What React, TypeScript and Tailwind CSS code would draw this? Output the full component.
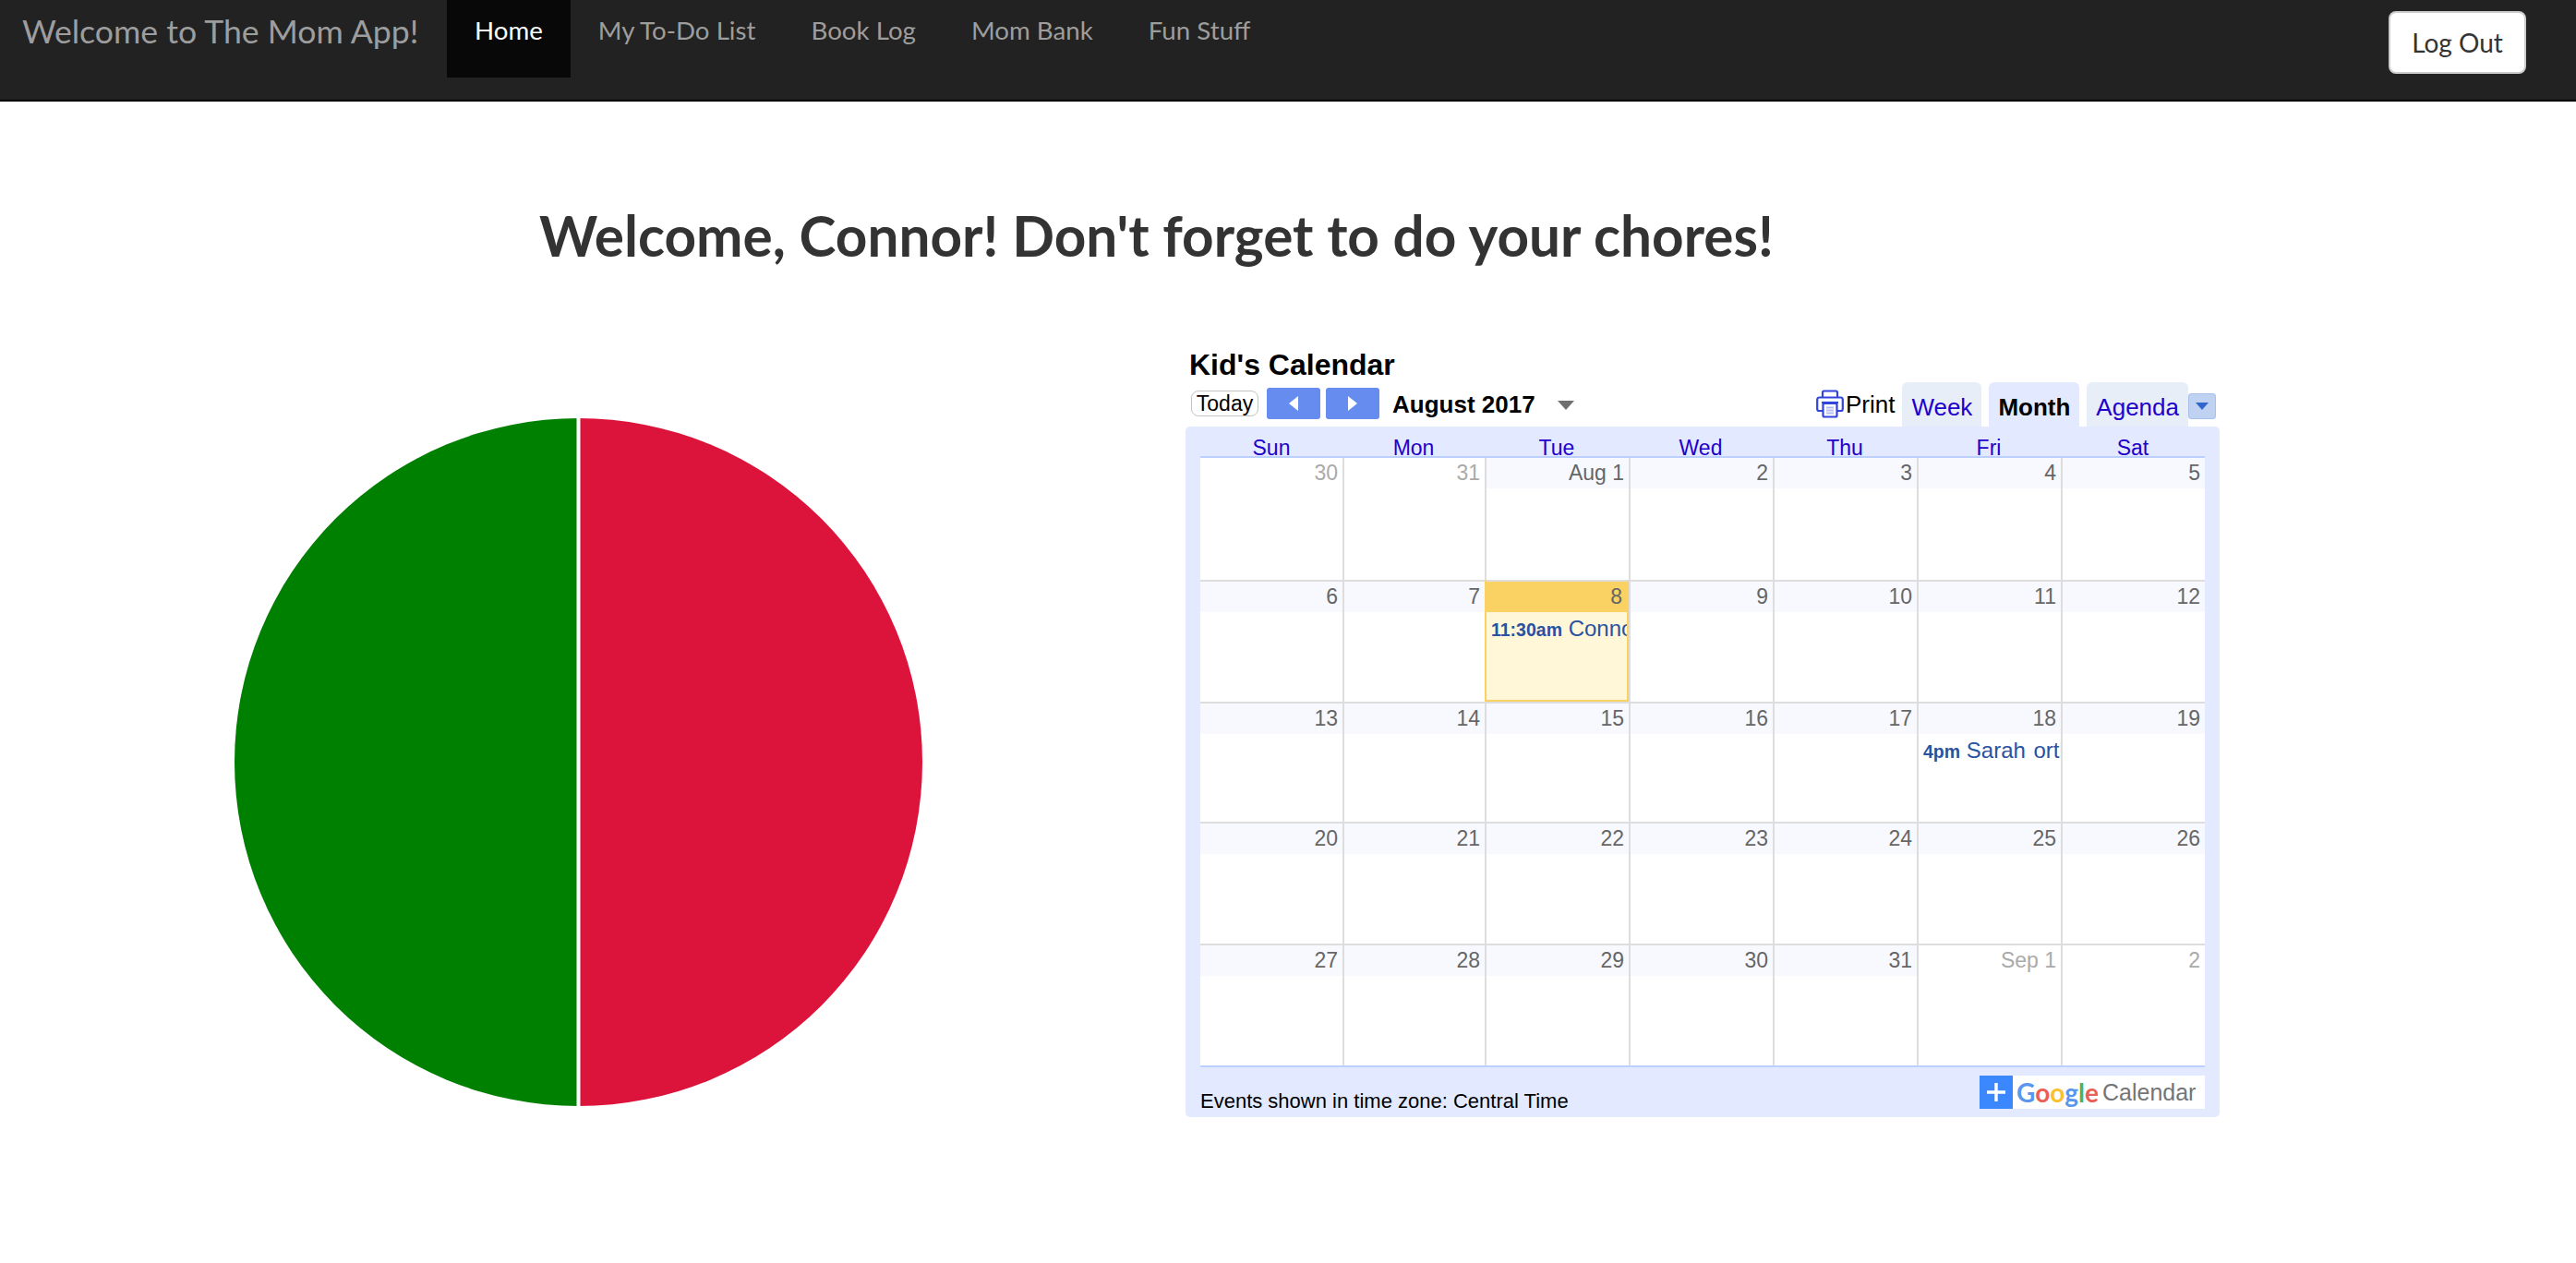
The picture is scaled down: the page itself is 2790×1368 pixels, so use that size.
import { ReactNode } from 'react';

// Nav links after the brand
const NAV_LINKS = ['Home', 'My To-Do List', 'Book Log', 'Mom Bank', 'Fun Stuff'];
const WEEKDAYS = ['Sun', 'Mon', 'Tue', 'Wed', 'Thu', 'Fri', 'Sat'];

type Day = { label: string; muted?: boolean; today?: boolean; time?: string; title?: string };

const WEEKS: { height: string; days: Day[] }[] = [
  {
    height: 'h-[132px]',
    days: [
      { label: '30', muted: true },
      { label: '31', muted: true },
      { label: 'Aug 1' },
      { label: '2' },
      { label: '3' },
      { label: '4' },
      { label: '5' },
    ],
  },
  {
    height: 'h-[132px]',
    days: [
      { label: '6' },
      { label: '7' },
      { label: '8', today: true, time: '11:30am', title: 'Connor dentist' },
      { label: '9' },
      { label: '10' },
      { label: '11' },
      { label: '12' },
    ],
  },
  {
    height: 'h-[130px]',
    days: [
      { label: '13' },
      { label: '14' },
      { label: '15' },
      { label: '16' },
      { label: '17' },
      { label: '18', time: '4pm', title: 'Sarah ortho' },
      { label: '19' },
    ],
  },
  {
    height: 'h-[132px]',
    days: ['20', '21', '22', '23', '24', '25', '26'].map((label) => ({ label })),
  },
  {
    height: 'h-[132px]',
    days: [
      { label: '27' },
      { label: '28' },
      { label: '29' },
      { label: '30' },
      { label: '31' },
      { label: 'Sep 1', muted: true },
      { label: '2', muted: true },
    ],
  },
];

function Navbar() {
  return (
    <nav className="flex h-[110px] items-start border-b-2 border-black bg-[#222222] font-['Lato',sans-serif]">
      <span className="w-[484px] pl-[24px] pt-[12px] text-[35.65px] leading-[44px] text-[#9d9d9d]">
        Welcome to The Mom App!
      </span>
      {NAV_LINKS.map((link) => (
        <a
          key={link}
          className={`h-[84px] px-[30px] pt-[13px] text-[27.7px] leading-[40px] ${
            link === 'Home' ? 'bg-[#080808] text-white' : 'text-[#9d9d9d]'
          }`}
        >
          {link}
        </a>
      ))}
      <button className="ml-auto mr-[54px] mt-[12px] h-[68px] w-[149px] rounded-[8px] border-2 border-[#cccccc] bg-white text-[28px] text-[#333333]">
        Log Out
      </button>
    </nav>
  );
}

// Two equal half slices with a white seam
function ChoresPie() {
  return (
    <svg viewBox="0 0 746 746" className="ml-[254px] mt-[77px] h-[745px] w-[745px] shrink-0">
      <path d="M373 373 L373 0 A373 373 0 0 1 373 746 Z" fill="#dc143c" />
      <path d="M373 373 L373 746 A373 373 0 0 1 373 0 Z" fill="#008000" />
      <line x1="373" y1="0" x2="373" y2="746" stroke="#ffffff" strokeWidth="4" />
    </svg>
  );
}

function PrintIcon() {
  return (
    <svg viewBox="0 0 30 31" className="h-[31px] w-[30px]" fill="none" stroke="#3344dd" strokeWidth="2.2">
      <path d="M7 9 V3 Q7 1.5 8.5 1.5 H21.5 Q23 1.5 23 3 V9" />
      <path d="M7 23 H3 Q1.2 23 1.2 21 V11 Q1.2 8.5 3.5 8.5 H26.5 Q28.8 8.5 28.8 11 V21 Q28.8 23 27 23 H23" />
      <path d="M6 14 H24" />
      <rect x="7.5" y="15" width="15" height="14.5" rx="1.5" />
      <path d="M11 19.5 H19 M11 22.5 H19 M11 25.5 H19" stroke="#b5bdf0" strokeWidth="2" />
    </svg>
  );
}

function Tab({ children, active }: { children: ReactNode; active?: boolean }) {
  return (
    <div
      className={`flex h-[48px] items-center rounded-t-[6px] px-[10px] pt-[6px] text-[26px] ${
        active ? 'bg-[#e3e9ff] font-bold text-black' : 'bg-[#e8eef7] text-[#2200cc]'
      }`}
    >
      {children}
    </div>
  );
}

function ArrowButton({ dir }: { dir: 'left' | 'right' }) {
  return (
    <button className="flex h-[34px] w-[58px] items-center justify-center rounded-[3px] bg-[#668cf0]">
      <svg viewBox="0 0 12 16" className="h-[16px] w-[12px]" fill="#ffffff">
        <path d={dir === 'left' ? 'M11 0 V16 L1 8 Z' : 'M1 0 V16 L11 8 Z'} />
      </svg>
    </button>
  );
}

function CalendarToolbar() {
  return (
    <div className="flex h-[48px] items-start pl-[6px] pr-[4px]">
      <button className="mt-[9px] flex h-[28px] w-[73px] items-center justify-center rounded-[8px] border border-[#c4c4c4] bg-white text-[23px] text-black">
        Today
      </button>
      <div className="ml-[9px] mt-[6px] flex gap-[6px]">
        <ArrowButton dir="left" />
        <ArrowButton dir="right" />
      </div>
      <span className="ml-[14px] mt-[9px] text-[26px] font-bold leading-[30px] text-black">August 2017</span>
      <svg viewBox="0 0 18 10" className="ml-[24px] mt-[20px] h-[10px] w-[18px]" fill="#6f6f6f">
        <path d="M0 0 H18 L9 10 Z" />
      </svg>
      <div className="ml-auto mt-[8px] flex items-center gap-[2px]">
        <PrintIcon />
        <span className="text-[26px] leading-[30px] text-black">Print</span>
      </div>
      <div className="ml-[8px] flex gap-[8px]">
        <Tab>Week</Tab>
        <Tab active>Month</Tab>
      </div>
      <div className="ml-[8px] flex items-start">
        <Tab>Agenda</Tab>
        <div className="mt-[12px] flex h-[28px] w-[30px] items-center justify-center rounded-[3px] border border-[#a9c0ec] bg-[#bfd2f2]">
          <svg viewBox="0 0 14 8" className="h-[8px] w-[14px]" fill="#3366cc">
            <path d="M0 0 H14 L7 8 Z" />
          </svg>
        </div>
      </div>
    </div>
  );
}

function DayCell({ day, first, topLine }: { day: Day; first: boolean; topLine: boolean }) {
  const stripColor = day.today ? 'bg-[#fad163]' : day.muted ? 'bg-white' : 'bg-[#f8f9ff]';
  const numberColor = day.muted ? 'text-[#aaaaaa]' : 'text-[#666666]';
  const edges = day.today
    ? 'border-x-2 border-b-2 border-[#fad163] bg-[#fff7d7]'
    : `bg-white ${first ? '' : 'border-l-2 border-[#dddddd]'}`;
  return (
    <div className={`min-w-0 overflow-hidden ${edges} ${topLine ? 'border-t-2 border-t-[#dddddd]' : ''}`}>
      <div className={`h-[33px] pr-[5px] text-right text-[23px] leading-[33px] ${stripColor} ${numberColor}`}>
        {day.label}
      </div>
      {day.time && (
        <div className="overflow-hidden whitespace-nowrap pl-[5px] pt-[2px] text-[24px] leading-[32px] text-[#2952a3]">
          <span className="text-[19.5px] font-bold">{day.time}</span>{' '}
          <span className="[word-spacing:2px]">{day.title}</span>
        </div>
      )}
    </div>
  );
}

function GoogleBadge() {
  const letters: [string, string][] = [
    ['G', 'text-[#5a95ee]'],
    ['o', 'text-[#ea5f55]'],
    ['o', 'text-[#fbc02d]'],
    ['g', 'text-[#5a95ee]'],
    ['l', 'text-[#4caf6a]'],
    ['e', 'text-[#ea5f55]'],
  ];
  return (
    <div className="flex h-[36px] w-[244px] items-center bg-white">
      <div className="flex h-[36px] w-[36px] items-center justify-center bg-[#3b87fd]">
        <svg viewBox="0 0 20 20" className="h-[20px] w-[20px]" stroke="#ffffff" strokeWidth="3.4">
          <path d="M10 0 V20 M0 10 H20" />
        </svg>
      </div>
      <span className="ml-[4px] font-['Lato',sans-serif] text-[28px] font-bold leading-[36px]">
        {letters.map(([ch, color], i) => (
          <span key={i} className={color}>
            {ch}
          </span>
        ))}
      </span>
      <span className="ml-[4px] text-[25px] leading-[36px] text-[#757575]">Calendar</span>
    </div>
  );
}

function KidsCalendar() {
  return (
    <div className="ml-[285px] w-[1120px] font-['Liberation_Sans',Arial,sans-serif]">
      <div className="h-[38px] pl-[4px] text-[32px] font-bold leading-[38px] text-black">Kid's Calendar</div>
      <CalendarToolbar />
      <div className="rounded-[5px] bg-[#e3e9ff] px-[16px] pb-[2px]">
        <div className="grid h-[34px] grid-cols-[154px_154px_156px_156px_156px_156px_156px] border-b-2 border-[#bcd0ff] pt-[5px] text-center text-[23px] leading-[36px] text-[#2200cc]">
          {WEEKDAYS.map((d) => (
            <div key={d} className="h-[27px]">
              {d}
            </div>
          ))}
        </div>
        {WEEKS.map((week, w) => (
          <div key={w} className={`grid grid-cols-[154px_154px_156px_156px_156px_156px_156px] ${week.height}`}>
            {week.days.map((day, i) => (
              <DayCell key={i} day={day} first={i === 0} topLine={w > 0} />
            ))}
          </div>
        ))}
        <div className="flex h-[54px] items-end justify-between border-t-2 border-[#bcd0ff]">
          <span className="text-[22px] leading-[30px] text-black">Events shown in time zone: Central Time</span>
          <div className="mb-[7px]">
            <GoogleBadge />
          </div>
        </div>
      </div>
    </div>
  );
}

export default function App() {
  return (
    <div className="min-h-screen bg-white">
      <Navbar />
      <main>
        <h1 className="w-[2505px] pt-[109px] text-center font-['Lato',sans-serif] text-[60.3px] font-bold leading-[72px] text-[#333333]">
          Welcome, Connor! Don't forget to do your chores!
        </h1>
        <div className="mt-[85px] flex items-start">
          <ChoresPie />
          <KidsCalendar />
        </div>
      </main>
    </div>
  );
}
